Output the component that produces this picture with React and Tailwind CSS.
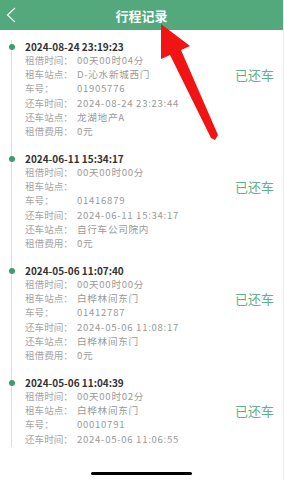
import React from 'react';

const trips = [
    {
        date: '2024-08-24 23:19:23',
        rows: [
            ['租借时间：', '00天00时04分'],
            ['租车站点：', 'D-沁水新城西门'],
            ['车号：', '01905776'],
            ['还车时间：', '2024-08-24 23:23:44'],
            ['还车站点：', '龙湖地产A'],
            ['租借费用：', '0元'],
        ],
    },
    {
        date: '2024-06-11 15:34:17',
        rows: [
            ['租借时间：', '00天00时00分'],
            ['租车站点：', ''],
            ['车号：', '01416879'],
            ['还车时间：', '2024-06-11 15:34:17'],
            ['还车站点：', '自行车公司院内'],
            ['租借费用：', '0元'],
        ],
    },
    {
        date: '2024-05-06 11:07:40',
        rows: [
            ['租借时间：', '00天00时00分'],
            ['租车站点：', '白桦林间东门'],
            ['车号：', '01412787'],
            ['还车时间：', '2024-05-06 11:08:17'],
            ['还车站点：', '白桦林间东门'],
            ['租借费用：', '0元'],
        ],
    },
    {
        date: '2024-05-06 11:04:39',
        rows: [
            ['租借时间：', '00天00时02分'],
            ['租车站点：', '白桦林间东门'],
            ['车号：', '00010791'],
            ['还车时间：', '2024-05-06 11:06:55'],
        ],
    },
];

const TripItem = ({ trip, last }) => (
    <div className={`relative flex pl-[13px] ${last ? 'pb-[1px]' : 'pb-[13.8px]'}`}>
        {/* timeline dot */}
        <span className="absolute left-[-3.5px] top-[4px] w-[6px] h-[6px] rounded-full bg-[#3d9c70]" />
        <div className="flex-1">
            <p className="text-[10px] leading-[13px] font-semibold text-[#333]">{trip.date}</p>
            {trip.rows.map(([label, value], i) => (
                <div key={i} className="flex text-[9.6px] leading-[14.2px] text-[#a6a6a6]">
                    <span className="w-[52px] shrink-0">{label}</span>
                    <span className="text-[#9a9a9a] tracking-[0.7px]">{value}</span>
                </div>
            ))}
        </div>
        <div className="pt-[21px] pr-[9px]">
            <span className="text-[13px] leading-[16px] text-[#62b089]">已还车</span>
        </div>
    </div>
);

const App = () => {
    return (
        <div
            className="relative w-[284px] h-[480px] overflow-hidden bg-white border-r border-[#ececec]"
            style={{ fontFamily: '"Noto Sans CJK SC", "Noto Sans", sans-serif' }}
        >
            {/* header */}
            <div className="h-[30px] bg-[#53a97c] flex items-center px-[5px]">
                <svg width="12" height="16" viewBox="0 0 12 16" className="shrink-0">
                    <path d="M10 1 L2.5 8 L10 15" fill="none" stroke="#fff" strokeWidth="1.1" />
                </svg>
                <p className="flex-1 text-center text-white text-[13px] font-bold leading-none pr-[12px]">行程记录</p>
            </div>

            {/* list */}
            <div className="h-[417px] pt-[10px]">
                <div className="ml-[11px] border-l border-[#dedede]">
                    {trips.map((trip, i) => (
                        <TripItem key={i} trip={trip} last={i === trips.length - 1} />
                    ))}
                </div>
            </div>

            {/* home indicator */}
            <div className="h-[33px] flex justify-center items-end pb-[5px]">
                <div className="w-[101px] h-[3px] rounded-full bg-black" />
            </div>

            {/* red annotation arrow */}
            <svg className="absolute left-0 top-0 pointer-events-none" width="284" height="480" viewBox="0 0 284 480">
                <polygon
                    points="161,24 190,46 181,50 218,135 215,140 211,138 170,55 161,59"
                    fill="#f01414"
                />
            </svg>
        </div>
    );
};

export default App;
